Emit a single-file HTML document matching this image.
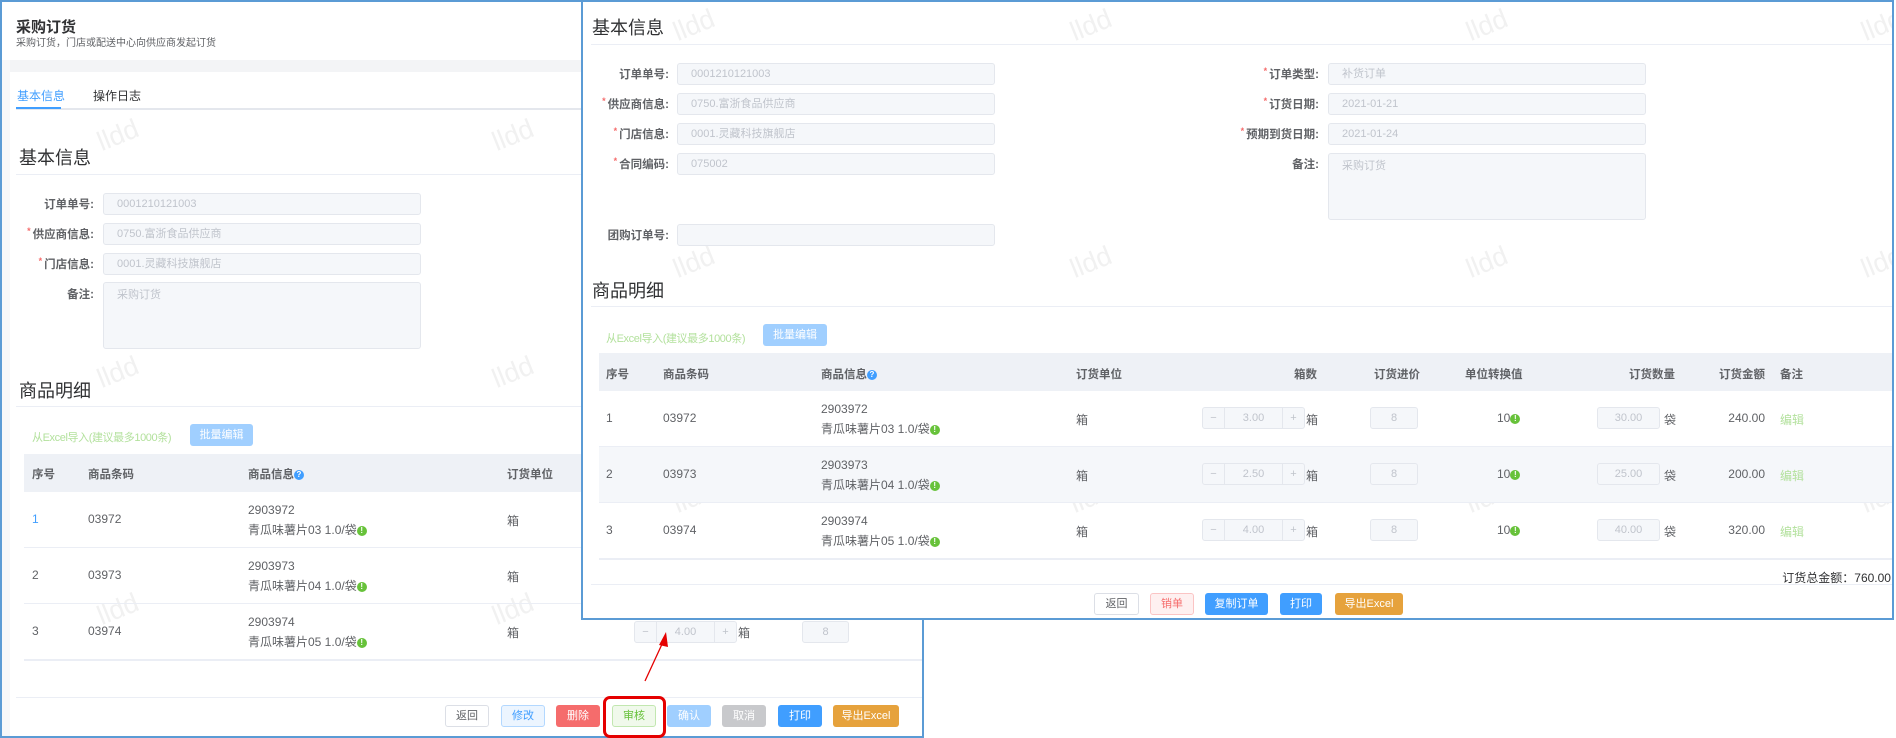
<!DOCTYPE html>
<html><head><meta charset="utf-8">
<style>
*{box-sizing:border-box;margin:0;padding:0}
body{width:1896px;height:738px;position:relative;overflow:hidden;background:#fff;font-family:"Liberation Sans","Noto Sans CJK SC",sans-serif;font-size:12px;color:#606266}
.a{position:absolute;white-space:nowrap}
.panel{position:absolute;border:2px solid #5b9bd5;background:#fff;overflow:hidden}
.wm{position:absolute;color:#f1f1f1;font-size:27px;transform:rotate(-22deg);font-family:"Liberation Sans",sans-serif}
.lbl{position:absolute;text-align:right;font-weight:bold;color:#606266;font-size:11.5px}
.star{color:#f56c6c;font-size:9px;margin-right:2px;vertical-align:top}
.inp{position:absolute;background:#f5f7fa;border:1px solid #e4e7ed;border-radius:3px;color:#c0c4cc;font-size:11px;padding-left:13px;line-height:20px}
.h{position:absolute;font-size:18px;color:#303133}
.line{position:absolute;height:1px;background:#ebeef5}
.btn{position:absolute;height:22px;border-radius:3px;font-size:11px;text-align:center;line-height:20px;border:1px solid transparent;color:#fff}
.th{position:absolute;font-weight:bold;color:#606266;font-size:11.5px}
.q{display:inline-block;width:10px;height:10px;border-radius:50%;background:#409eff;color:#fff;font-size:8px;line-height:10px;text-align:center;vertical-align:middle}
.g{display:inline-block;width:10px;height:10px;border-radius:50%;background:#67c23a;color:#fff;font-size:8px;font-weight:bold;line-height:10px;text-align:center;vertical-align:middle}
.td{position:absolute;color:#606266;font-size:12px}
.step{position:absolute;width:103px;height:22px;border:1px solid #e4e7ed;border-radius:3px;background:#f5f7fa;color:#c0c4cc;font-size:11px;line-height:20px}
.step .m{position:absolute;left:0;width:22px;text-align:center;border-right:1px solid #e4e7ed;height:20px}
.step .p{position:absolute;right:0;width:22px;text-align:center;border-left:1px solid #e4e7ed;height:20px}
.step .v{position:absolute;left:22px;right:22px;text-align:center}
.small{position:absolute;height:22px;border:1px solid #e4e7ed;border-radius:3px;background:#f5f7fa;color:#c0c4cc;font-size:11px;line-height:20px;text-align:center}
.xl{position:absolute;color:#b3e19d;font-size:11px;letter-spacing:-0.4px;white-space:nowrap}
</style></head><body>

<!-- LEFT PANEL -->
<div class="panel" style="left:0;top:0;width:924px;height:738px">
  <div class="a" style="left:0;top:58px;width:924px;height:12px;background:#f3f4f6"></div>
  <div class="a" style="left:0;top:58px;width:8px;height:680px;background:#f6f7f9"></div>
  <div class="a" style="left:14px;top:14px;font-size:15px;font-weight:bold;color:#303133">采购订货</div>
  <div class="a" style="left:14px;top:32px;font-size:10px;color:#606266">采购订货，门店或配送中心向供应商发起订货</div>
  <div class="a" style="left:15px;top:85px;color:#409eff;font-size:12px">基本信息</div>
  <div class="a" style="left:91px;top:85px;color:#303133;font-size:12px">操作日志</div>
  <div class="line" style="left:14px;top:106px;width:910px;height:2px;background:#e4e7ed"></div>
  <div class="a" style="left:14px;top:105px;width:45px;height:2px;background:#409eff"></div>

  <div class="wm" style="left:95px;top:118px">lldd</div>
  <div class="wm" style="left:490px;top:118px">lldd</div>
  <div class="wm" style="left:95px;top:355px">lldd</div>
  <div class="wm" style="left:490px;top:355px">lldd</div>
  <div class="wm" style="left:95px;top:592px">lldd</div>
  <div class="wm" style="left:490px;top:592px">lldd</div>

  <div class="h" style="left:17px;top:142px">基本信息</div>
  <div class="line" style="left:14px;top:172px;width:910px"></div>
  <div class="lbl" style="left:0;top:194px;width:92px">订单单号:</div>
  <div class="inp" style="left:101px;top:191px;width:318px;height:22px">0001210121003</div>
  <div class="lbl" style="left:0;top:224px;width:92px"><span class="star">*</span>供应商信息:</div>
  <div class="inp" style="left:101px;top:221px;width:318px;height:22px">0750.富浙食品供应商</div>
  <div class="lbl" style="left:0;top:254px;width:92px"><span class="star">*</span>门店信息:</div>
  <div class="inp" style="left:101px;top:251px;width:318px;height:22px">0001.灵藏科技旗舰店</div>
  <div class="lbl" style="left:0;top:284px;width:92px">备注:</div>
  <div class="inp" style="left:101px;top:280px;width:318px;height:67px;padding-top:2px">采购订货</div>

  <div class="h" style="left:17px;top:375px">商品明细</div>
  <div class="line" style="left:14px;top:404px;width:910px"></div>
  <div class="xl" style="left:30px;top:427px">从Excel导入(建议最多1000条)</div>
  <div class="btn" style="left:188px;top:422px;width:63px;background:#a0cfff">批量编辑</div>
  <div class="a" style="left:22px;top:452px;width:902px;height:38px;background:#eef1f6"></div>
  <div class="th" style="left:30px;top:464px">序号</div>
  <div class="th" style="left:86px;top:464px">商品条码</div>
  <div class="th" style="left:246px;top:464px">商品信息<span class="q">?</span></div>
  <div class="th" style="left:505px;top:464px">订货单位</div>
  <div class="line" style="left:22px;top:545px;width:902px"></div>
  <div class="line" style="left:22px;top:601px;width:902px"></div>
  <div class="line" style="left:22px;top:657px;width:902px;height:2px"></div>
  <div class="td" style="left:30px;top:510px;color:#409eff">1</div>
  <div class="td" style="left:86px;top:510px">03972</div>
  <div class="td" style="left:246px;top:501px">2903972</div>
  <div class="td" style="left:246px;top:519px">青瓜味薯片03 1.0/袋<span class="g">!</span></div>
  <div class="td" style="left:505px;top:510px">箱</div>
  <div class="td" style="left:30px;top:566px">2</div>
  <div class="td" style="left:86px;top:566px">03973</div>
  <div class="td" style="left:246px;top:557px">2903973</div>
  <div class="td" style="left:246px;top:575px">青瓜味薯片04 1.0/袋<span class="g">!</span></div>
  <div class="td" style="left:505px;top:566px">箱</div>
  <div class="td" style="left:30px;top:622px">3</div>
  <div class="td" style="left:86px;top:622px">03974</div>
  <div class="td" style="left:246px;top:613px">2903974</div>
  <div class="td" style="left:246px;top:631px">青瓜味薯片05 1.0/袋<span class="g">!</span></div>
  <div class="td" style="left:505px;top:622px">箱</div>
  <div class="step" style="left:632px;top:619px"><span class="m">−</span><span class="v">4.00</span><span class="p">+</span></div>
  <div class="td" style="left:736px;top:622px">箱</div>
  <div class="small" style="left:800px;top:619px;width:47px">8</div>
  <div class="line" style="left:14px;top:695px;width:910px"></div>
  <div class="btn" style="left:443px;top:703px;width:44px;background:#fff;border-color:#dcdfe6;color:#606266">返回</div>
  <div class="btn" style="left:499px;top:703px;width:44px;background:#ecf5ff;border-color:#b3d8ff;color:#409eff">修改</div>
  <div class="btn" style="left:554px;top:703px;width:44px;background:#f56c6c">删除</div>
  <div class="btn" style="left:610px;top:703px;width:44px;background:#f0f9eb;border-color:#c2e7b0;color:#67c23a">审核</div>
  <div class="btn" style="left:665px;top:703px;width:44px;background:#a0cfff">确认</div>
  <div class="btn" style="left:720px;top:703px;width:44px;background:#c8c9cc">取消</div>
  <div class="btn" style="left:776px;top:703px;width:44px;background:#409eff">打印</div>
  <div class="btn" style="left:831px;top:703px;width:66px;background:#e6a23c">导出Excel</div>
</div>

<!-- red highlight + arrow -->
<div class="a" style="left:603px;top:696px;width:63px;height:42px;border:3px solid #e50000;border-radius:7px"></div>
<svg class="a" style="left:0;top:0" width="1896" height="738">
  <line x1="645" y1="681" x2="663" y2="642" stroke="#e50000" stroke-width="1.3"/>
  <polygon points="666,632 659,645 668,647" fill="#e50000"/>
</svg>

<!-- RIGHT PANEL -->
<div class="panel" style="left:581px;top:0;width:1313px;height:620px">
  <div class="wm" style="left:90px;top:8px">lldd</div>
  <div class="wm" style="left:487px;top:8px">lldd</div>
  <div class="wm" style="left:883px;top:8px">lldd</div>
  <div class="wm" style="left:1278px;top:8px">lldd</div>
  <div class="wm" style="left:90px;top:245px">lldd</div>
  <div class="wm" style="left:487px;top:245px">lldd</div>
  <div class="wm" style="left:883px;top:245px">lldd</div>
  <div class="wm" style="left:1278px;top:245px">lldd</div>
  <div class="wm" style="left:90px;top:480px">lldd</div>
  <div class="wm" style="left:487px;top:480px">lldd</div>
  <div class="wm" style="left:883px;top:480px">lldd</div>
  <div class="wm" style="left:1278px;top:480px">lldd</div>

  <div class="h" style="left:9px;top:12px">基本信息</div>
  <div class="line" style="left:8px;top:42px;width:1305px"></div>
  <div class="lbl" style="left:0;top:64px;width:86px">订单单号:</div>
  <div class="inp" style="left:94px;top:61px;width:318px;height:22px">0001210121003</div>
  <div class="lbl" style="left:0;top:94px;width:86px"><span class="star">*</span>供应商信息:</div>
  <div class="inp" style="left:94px;top:91px;width:318px;height:22px">0750.富浙食品供应商</div>
  <div class="lbl" style="left:0;top:124px;width:86px"><span class="star">*</span>门店信息:</div>
  <div class="inp" style="left:94px;top:121px;width:318px;height:22px">0001.灵藏科技旗舰店</div>
  <div class="lbl" style="left:0;top:154px;width:86px"><span class="star">*</span>合同编码:</div>
  <div class="inp" style="left:94px;top:151px;width:318px;height:22px">075002</div>
  <div class="lbl" style="left:0;top:225px;width:86px">团购订单号:</div>
  <div class="inp" style="left:94px;top:222px;width:318px;height:22px"></div>

  <div class="lbl" style="left:600px;top:64px;width:136px"><span class="star">*</span>订单类型:</div>
  <div class="inp" style="left:745px;top:61px;width:318px;height:22px">补货订单</div>
  <div class="lbl" style="left:600px;top:94px;width:136px"><span class="star">*</span>订货日期:</div>
  <div class="inp" style="left:745px;top:91px;width:318px;height:22px">2021-01-21</div>
  <div class="lbl" style="left:600px;top:124px;width:136px"><span class="star">*</span>预期到货日期:</div>
  <div class="inp" style="left:745px;top:121px;width:318px;height:22px">2021-01-24</div>
  <div class="lbl" style="left:600px;top:154px;width:136px">备注:</div>
  <div class="inp" style="left:745px;top:151px;width:318px;height:67px;padding-top:2px">采购订货</div>

  <div class="h" style="left:9px;top:275px">商品明细</div>
  <div class="line" style="left:8px;top:304px;width:1305px"></div>
  <div class="xl" style="left:23px;top:328px">从Excel导入(建议最多1000条)</div>
  <div class="btn" style="left:180px;top:322px;width:64px;background:#a0cfff">批量编辑</div>
  <div class="a" style="left:16px;top:351px;width:1297px;height:38px;background:#eef1f6"></div>
  <div class="th" style="left:23px;top:364px">序号</div>
  <div class="th" style="left:80px;top:364px">商品条码</div>
  <div class="th" style="left:238px;top:364px">商品信息<span class="q">?</span></div>
  <div class="th" style="left:493px;top:364px">订货单位</div>
  <div class="th" style="left:711px;top:364px">箱数</div>
  <div class="th" style="left:791px;top:364px">订货进价</div>
  <div class="th" style="left:882px;top:364px">单位转换值</div>
  <div class="th" style="left:1046px;top:364px">订货数量</div>
  <div class="th" style="left:1136px;top:364px">订货金额</div>
  <div class="th" style="left:1197px;top:364px">备注</div>

  <div class="a" style="left:16px;top:444px;width:1297px;height:56px;background:#f5f7fa"></div>
  <div class="line" style="left:16px;top:444px;width:1297px"></div>
  <div class="line" style="left:16px;top:500px;width:1297px"></div>
  <div class="line" style="left:16px;top:556px;width:1297px;height:2px"></div>

  <div class="td" style="left:23px;top:409px">1</div>
  <div class="td" style="left:80px;top:409px">03972</div>
  <div class="td" style="left:238px;top:400px">2903972</div>
  <div class="td" style="left:238px;top:418px">青瓜味薯片03 1.0/袋<span class="g">!</span></div>
  <div class="td" style="left:493px;top:409px">箱</div>
  <div class="step" style="left:619px;top:405px"><span class="m">−</span><span class="v">3.00</span><span class="p">+</span></div>
  <div class="td" style="left:723px;top:409px">箱</div>
  <div class="small" style="left:787px;top:405px;width:48px">8</div>
  <div class="td" style="left:914px;top:409px">10<span class="g">!</span></div>
  <div class="small" style="left:1014px;top:405px;width:63px">30.00</div>
  <div class="td" style="left:1081px;top:409px">袋</div>
  <div class="td" style="left:1130px;top:409px;width:52px;text-align:right">240.00</div>
  <div class="td" style="left:1197px;top:409px;color:#b3e19d">编辑</div>

  <div class="td" style="left:23px;top:465px">2</div>
  <div class="td" style="left:80px;top:465px">03973</div>
  <div class="td" style="left:238px;top:456px">2903973</div>
  <div class="td" style="left:238px;top:474px">青瓜味薯片04 1.0/袋<span class="g">!</span></div>
  <div class="td" style="left:493px;top:465px">箱</div>
  <div class="step" style="left:619px;top:461px"><span class="m">−</span><span class="v">2.50</span><span class="p">+</span></div>
  <div class="td" style="left:723px;top:465px">箱</div>
  <div class="small" style="left:787px;top:461px;width:48px">8</div>
  <div class="td" style="left:914px;top:465px">10<span class="g">!</span></div>
  <div class="small" style="left:1014px;top:461px;width:63px">25.00</div>
  <div class="td" style="left:1081px;top:465px">袋</div>
  <div class="td" style="left:1130px;top:465px;width:52px;text-align:right">200.00</div>
  <div class="td" style="left:1197px;top:465px;color:#b3e19d">编辑</div>

  <div class="td" style="left:23px;top:521px">3</div>
  <div class="td" style="left:80px;top:521px">03974</div>
  <div class="td" style="left:238px;top:512px">2903974</div>
  <div class="td" style="left:238px;top:530px">青瓜味薯片05 1.0/袋<span class="g">!</span></div>
  <div class="td" style="left:493px;top:521px">箱</div>
  <div class="step" style="left:619px;top:517px"><span class="m">−</span><span class="v">4.00</span><span class="p">+</span></div>
  <div class="td" style="left:723px;top:521px">箱</div>
  <div class="small" style="left:787px;top:517px;width:48px">8</div>
  <div class="td" style="left:914px;top:521px">10<span class="g">!</span></div>
  <div class="small" style="left:1014px;top:517px;width:63px">40.00</div>
  <div class="td" style="left:1081px;top:521px">袋</div>
  <div class="td" style="left:1130px;top:521px;width:52px;text-align:right">320.00</div>
  <div class="td" style="left:1197px;top:521px;color:#b3e19d">编辑</div>

  <div class="td" style="left:1100px;top:567px;width:208px;text-align:right;color:#303133">订货总金额：760.00</div>
  <div class="line" style="left:8px;top:582px;width:1305px"></div>
  <div class="btn" style="left:511px;top:591px;width:45px;background:#fff;border-color:#dcdfe6;color:#606266">返回</div>
  <div class="btn" style="left:567px;top:591px;width:44px;background:#fef0f0;border-color:#fbc4c4;color:#f56c6c">销单</div>
  <div class="btn" style="left:622px;top:591px;width:63px;background:#409eff">复制订单</div>
  <div class="btn" style="left:697px;top:591px;width:42px;background:#409eff">打印</div>
  <div class="btn" style="left:752px;top:591px;width:68px;background:#e6a23c">导出Excel</div>
</div>
</body></html>
